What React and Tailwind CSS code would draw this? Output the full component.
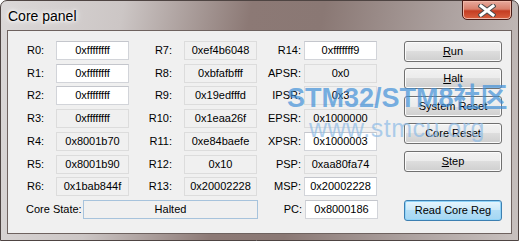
import React from "react";

const font = "font-['Liberation_Sans',Arial,sans-serif]";

const rowHeights = ["h-[23px]", "h-[22px]", "h-[23px]", "h-[23px]", "h-[23px]", "h-[22px]", "h-[23px]", "h-[23px]"];

const colA = [
  ["R0:", "0xffffffff", true],
  ["R1:", "0xffffffff", true],
  ["R2:", "0xffffffff", true],
  ["R3:", "0xffffffff", false],
  ["R4:", "0x8001b70", false],
  ["R5:", "0x8001b90", false],
  ["R6:", "0x1bab844f", false],
];

const colB = [
  ["R7:", "0xef4b6048"],
  ["R8:", "0xbfafbfff"],
  ["R9:", "0x19edfffd"],
  ["R10:", "0x1eaa26f"],
  ["R11:", "0xe84baefe"],
  ["R12:", "0x10"],
  ["R13:", "0x20002228"],
];

const colC = [
  ["R14:", "0xfffffff9", true],
  ["APSR:", "0x0", false],
  ["IPSR:", "0x3", false],
  ["EPSR:", "0x1000000", false],
  ["XPSR:", "0x1000003", true],
  ["PSP:", "0xaa80fa74", false],
  ["MSP:", "0x20002228", true],
  ["PC:", "0x8000186", true],
];

// edit box, white when editable, grey when read only
function Field({ value, white, className = "w-[73px]" }) {
  return (
    <div
      className={
        "h-[19px] flex items-center justify-center border text-[11px] leading-none text-black " +
        className +
        (white
          ? " bg-white border-[#d2d4d9] border-t-[#c4c6cc]"
          : " bg-[#f0f0f0] border-[#dcdcdc]")
      }
    >
      {value}
    </div>
  );
}

function Label({ text, className }) {
  return (
    <div className={"text-[11px] leading-none text-black pt-[4px] " + className}>
      {text}
    </div>
  );
}

function Btn({ children, top, primary }) {
  return (
    <button
      className={
        "w-[98px] h-[21px] rounded-[3px] border text-[11px] leading-none text-black flex items-center justify-center " +
        top +
        (primary
          ? " border-[#3c7fb1] bg-[linear-gradient(#e6f5fd_0%,#cbe9f9_50%,#b3def6_50%,#a4d6f3_100%)] shadow-[inset_0_0_0_1px_#8fd3f8]"
          : " border-[#707070] bg-[linear-gradient(#f2f2f2_0%,#ebebeb_50%,#dddddd_50%,#cfcfcf_100%)] shadow-[inset_0_0_0_1px_#fbfbfb]")
      }
    >
      {children}
    </button>
  );
}

export default function App() {
  return (
    <div className={"relative w-[520px] h-[242px] bg-white overflow-hidden " + font}>
      <div className="w-[519px] h-[241px] flex flex-col rounded-t-[7px] border border-[#4e4442] bg-[linear-gradient(100deg,#dbd8d8_0%,#ccc6c5_22%,#8c7975_45%,#8a7874_58%,#aca19f_80%,#c8c1bf_100%)]">
        {/* title bar */}
        <div className="h-[29px] flex items-start justify-between pl-[7px] pr-[6px]">
          <div className="mt-[5px] text-[14px] text-black [text-shadow:0_0_8px_#fff,0_0_5px_#fff,0_0_3px_#fff] font-['Liberation_Sans',sans-serif]">
            Core panel
          </div>
          <div className="w-[50px] h-[20px] -mt-px rounded-b-[5px] border border-[#4a1c16] bg-[linear-gradient(#e7a99c_0%,#d8806c_45%,#c43d22_55%,#d9603f_100%)] shadow-[inset_0_0_0_1px_#f0b8a8] flex items-center justify-center">
            <svg width="18" height="13" viewBox="0 0 18 13">
              <path d="M3 2 L15 11 M15 2 L3 11" stroke="#4b4b4b" strokeWidth="5" strokeLinecap="square" />
              <path d="M3 2 L15 11 M15 2 L3 11" stroke="#ffffff" strokeWidth="3" strokeLinecap="square" />
            </svg>
          </div>
        </div>
        {/* client area */}
        <div className="flex-1 mx-[6px] mb-[6px] border border-[#6e625f] bg-[#f0f0f0] flex">
          <div className="flex flex-col pt-[10px] pl-[19px]">
            {rowHeights.map((h, i) => (
              <div key={i} className={"flex items-start " + h}>
                {i < 7 ? (
                  <>
                    <Label text={colA[i][0]} className="w-[29px]" />
                    <Field value={colA[i][1]} white={colA[i][2]} />
                    <Label text={colB[i][0]} className="w-[43px] text-right" />
                    <div className="w-[12px]" />
                    <Field value={colB[i][1]} />
                  </>
                ) : (
                  <>
                    <Label text="Core State:" className="w-[57px] -ml-px" />
                    <Field
                      value="Halted"
                      className="w-[175px] !border-[#a7c3dc] !bg-[#f0f0f0]"
                    />
                  </>
                )}
                <Label text={colC[i][0]} className="w-[44px] text-right" />
                <div className="w-[3px]" />
                <Field value={colC[i][1]} white={colC[i][2]} />
              </div>
            ))}
          </div>
          <div className="flex flex-col pl-[26px] pt-[10px]">
            <Btn top="">
              <span><u>R</u>un</span>
            </Btn>
            <Btn top="mt-[6px]">
              <span><u>H</u>alt</span>
            </Btn>
            <Btn top="mt-[7px]">System Reset</Btn>
            <Btn top="mt-[6px]">Core Reset</Btn>
            <Btn top="mt-[7px]">
              <span><u>S</u>tep</span>
            </Btn>
            <Btn top="mt-[28px]" primary>
              Read Core Reg
            </Btn>
          </div>
        </div>
      </div>
      {/* watermark */}
      <div className="absolute left-[287px] top-[85px] pointer-events-none select-none">
        <div className="text-[27px] leading-none font-bold text-[#3f8fd8]/70 whitespace-nowrap font-['Liberation_Sans','Noto_Sans_CJK_SC',sans-serif]">
          STM32/STM8社区
        </div>
        <div className="ml-[22px] mt-[4px] text-[25px] leading-none tracking-[0.5px] text-[#8dbbe6]/70 whitespace-nowrap">
          www.stmcu.org
        </div>
      </div>
    </div>
  );
}
